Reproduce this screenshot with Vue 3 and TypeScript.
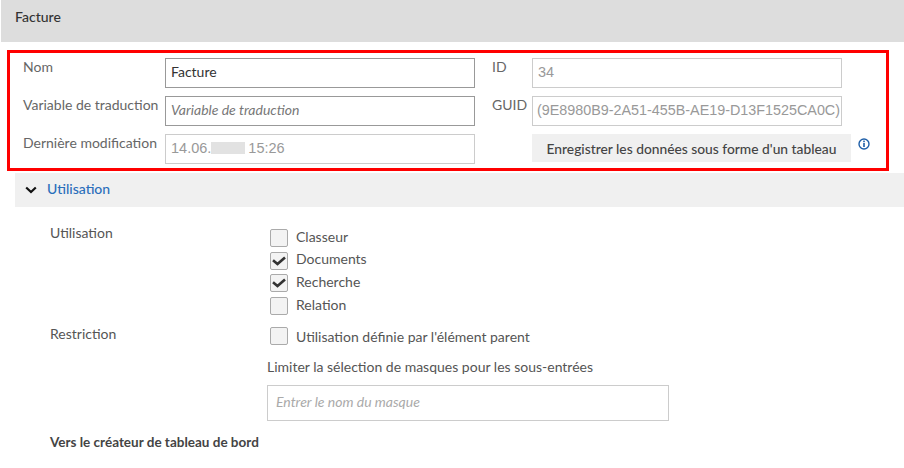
<script setup lang="ts">
const usages = [
  { label: 'Classeur', checked: false },
  { label: 'Documents', checked: true },
  { label: 'Recherche', checked: true },
  { label: 'Relation', checked: false },
]
</script>

<template>
  <div class="page">
    <header class="title">Facture</header>
    <section class="box">
      <div class="col col-left">
        <div class="row"><span class="lbl">Nom</span><div class="field">Facture</div></div>
        <div class="row"><span class="lbl">Variable de traduction</span><div class="field ph">Variable de traduction</div></div>
        <div class="row">
          <span class="lbl">Dernière modification</span>
          <div class="field off">14.06.<span class="redact"></span>15:26</div>
        </div>
      </div>
      <div class="col col-right">
        <div class="row"><span class="lbl">ID</span><div class="field off">34</div></div>
        <div class="row"><span class="lbl">GUID</span><div class="field off guid">(9E8980B9-2A51-455B-AE19-D13F1525CA0C)</div></div>
        <div class="row btn-row">
          <span class="lbl"></span>
          <button class="btn">Enregistrer les données sous forme d'un tableau</button>
          <svg class="info" width="12" height="12" viewBox="0 0 12 12">
            <circle cx="6" cy="6" r="5" fill="none" stroke="#1f5fa8" stroke-width="1.4" />
            <rect x="5.2" y="2.6" width="1.6" height="1.6" fill="#1f5fa8" />
            <rect x="5.2" y="5" width="1.6" height="4" fill="#1f5fa8" />
          </svg>
        </div>
      </div>
    </section>
    <div class="acc">
      <svg class="chev" width="12" height="8" viewBox="0 0 12 8">
        <path d="M1.2 1.5 L6 6 L10.8 1.5" fill="none" stroke="#111" stroke-width="2.2" />
      </svg>
      <span>Utilisation</span>
    </div>
    <section class="body">
      <div class="usage">
        <span class="lbl2">Utilisation</span>
        <div class="checks">
          <label v-for="u in usages" :key="u.label" class="check">
            <span class="cb">
              <svg v-if="u.checked" width="14" height="10" viewBox="0 0 14 10">
                <path d="M1 4.2 L5.5 8 L13 1.5" fill="none" stroke="#333" stroke-width="2.6" />
              </svg>
            </span>
            <span class="ctext">{{ u.label }}</span>
          </label>
        </div>
      </div>
      <div class="restrict">
        <span class="lbl2">Restriction</span>
        <label class="check"><span class="cb"></span><span>Utilisation définie par l'élément parent</span></label>
      </div>
      <div class="limit">
        <div class="limit-lbl">Limiter la sélection de masques pour les sous-entrées</div>
        <div class="mask">Entrer le nom du masque</div>
      </div>
      <div class="link">Vers le créateur de tableau de bord</div>
    </section>
  </div>
</template>

<style>
html, body { margin: 0; background: #fff; overflow: hidden; }
</style>

<style scoped>
.page {
  width: 904px;
  height: 468px;
  overflow: hidden;
  font-family: Lato, "Noto Sans", sans-serif;
  font-size: 14px;
  color: #555;
  background: #fff;
}
.title {
  height: 42px;
  margin-left: 1px;
  padding: 8px 0 0 14px;
  box-sizing: border-box;
  background: #dddddd;
  font-weight: 500;
  color: #333;
  line-height: 18px;
}
.box {
  box-sizing: border-box;
  width: 882px;
  height: 121px;
  margin: 8px 0 0 7px;
  border: 3px solid #ff0000;
  display: flex;
  padding: 5px 0 0 13px;
}
.col { display: flex; flex-direction: column; gap: 8px; }
.col-left { width: 452px; }
.row { display: flex; height: 30px; }
.lbl { line-height: 18px; color: #666; }
.col-left .lbl { width: 142px; flex: none; }
.col-right { width: 400px; margin-left: 17px; }
.col-right .lbl { width: 40px; flex: none; }
.field {
  box-sizing: border-box;
  width: 310px;
  height: 30px;
  border: 1px solid #999;
  padding-left: 5px;
  line-height: 26px;
  color: #333;
  white-space: nowrap;
  overflow: hidden;
}
.ph { font-style: italic; color: #777; }
.off { border-color: #ccc; color: #999; font-family: "Liberation Sans", sans-serif; font-size: 14.5px; line-height: 27px; }
.guid { font-size: 14.35px; padding-left: 4px; padding-right: 1px; }
.redact { display: inline-block; width: 34px; height: 12px; margin: 0 3px 0 0; background: #e2e2e2; vertical-align: -1px; }
.btn-row { align-items: flex-start; }
.btn {
  box-sizing: border-box;
  width: 319px;
  height: 28px;
  border: 0;
  background: #f0f0f0;
  font: 500 13.8px Lato, sans-serif;
  color: #444;
  padding: 0;
}
.info { margin: 4px 0 0 7px; flex: none; }
.acc {
  margin: 2px 0 0 15px;
  height: 34px;
  background: #f0f0f0;
  display: flex;
  align-items: center;
  font-weight: 500;
  color: #2a6ebb;
  padding-bottom: 4px;
  box-sizing: border-box;
}
.chev { margin: 4px 10px 0 10px; }
.body { padding: 17px 0 0 50px; }
.usage, .restrict { display: flex; }
.lbl2 { width: 220px; flex: none; line-height: 18px; }
.checks { display: flex; flex-direction: column; padding-top: 5px; gap: 4.7px; }
.check { display: flex; align-items: center; height: 18px; color: #555; }
.ctext { margin-top: -4px; }
.cb {
  box-sizing: border-box;
  width: 18px;
  height: 18px;
  margin-right: 8px;
  border: 1px solid #aaa;
  border-radius: 2px;
  background: #f3f3f3;
  display: flex;
  align-items: center;
  justify-content: center;
}
.restrict { margin-top: 10px; }
.restrict .check { margin-top: 2px; }
.limit { margin: 13px 0 0 217px; }
.limit-lbl { line-height: 18px; }
.mask {
  box-sizing: border-box;
  width: 402px;
  height: 36px;
  margin-top: 9px;
  border: 1px solid #ccc;
  padding-left: 8px;
  line-height: 32px;
  font-style: italic;
  color: #aaa;
}
.link { margin-top: 12px; font-weight: 700; font-size: 13.5px; color: #444; line-height: 18px; }
</style>
